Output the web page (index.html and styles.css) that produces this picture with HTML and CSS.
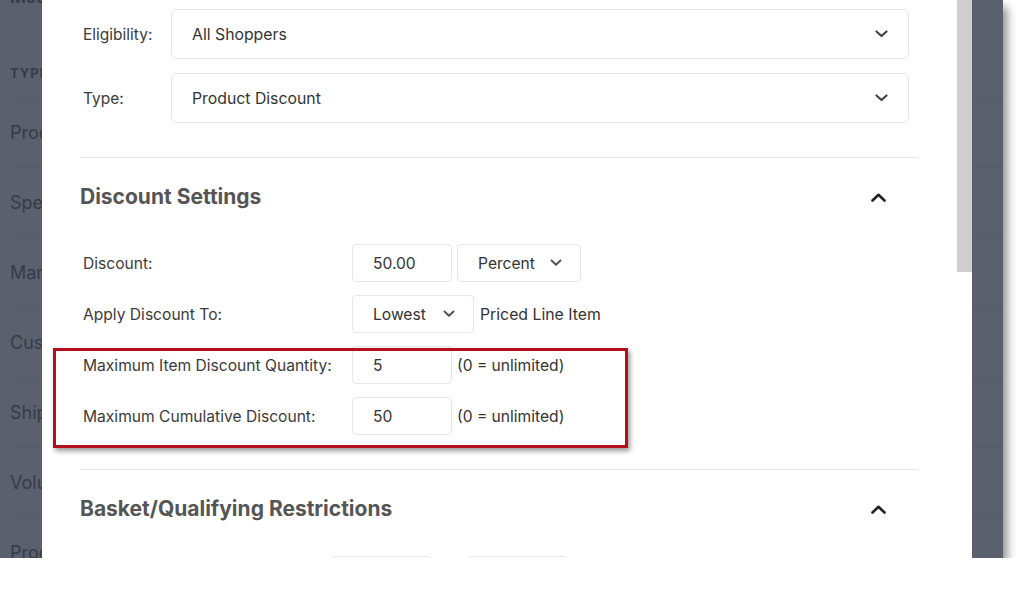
FILE: index.html
```html
<!DOCTYPE html>
<html>
  <head>
    <title>Promotion - Discount Settings</title>
    <meta charset="utf-8">
    <link rel="stylesheet" href="styles.css">
  </head>
  <body>
  <div class="screen">
    <!-- page behind the dialog -->
    <div class="bg-page">
      <div class="bg-title"><span class="bg-cell">Methods</span></div>
      <div class="bg-thead"><span class="bg-cell">TYPE</span></div>
      <div class="bg-row"><span class="bg-cell">Product Discount</span></div>
      <div class="bg-row"><span class="bg-cell">Special Price</span></div>
      <div class="bg-row"><span class="bg-cell">Markdown</span></div>
      <div class="bg-row"><span class="bg-cell">Customer Group</span></div>
      <div class="bg-row"><span class="bg-cell">Shipping</span></div>
      <div class="bg-row"><span class="bg-cell">Volume Pricing</span></div>
      <div class="bg-row"><span class="bg-cell">Product Bundle</span></div>
    </div>

    <div class="modal">
      <div class="modal-body">
        <div class="field-row">
          <label class="field-label">Eligibility:</label>
          <div class="select-box">
            <span>All Shoppers</span>
            <svg width="13" height="8" viewBox="0 0 13 8"><polyline points="1.5,1.5 6.5,6 11.5,1.5" fill="none" stroke="#444" stroke-width="2.2" stroke-linecap="round" stroke-linejoin="round"/></svg>
          </div>
        </div>
        <div class="field-row">
          <label class="field-label">Type:</label>
          <div class="select-box">
            <span>Product Discount</span>
            <svg width="13" height="8" viewBox="0 0 13 8"><polyline points="1.5,1.5 6.5,6 11.5,1.5" fill="none" stroke="#444" stroke-width="2.2" stroke-linecap="round" stroke-linejoin="round"/></svg>
          </div>
        </div>

        <div class="section">
          <div class="section-head">
            <h2>Discount Settings</h2>
            <svg width="15" height="9" viewBox="0 0 15 9"><polyline points="1.5,7.5 7.5,1.8 13.5,7.5" fill="none" stroke="#222" stroke-width="2.6" stroke-linecap="round" stroke-linejoin="round"/></svg>
          </div>

          <div class="line-row">
            <label class="line-label">Discount:</label>
            <div class="text-box">50.00</div>
            <div class="small-select percent">
              <span>Percent</span>
              <svg width="12" height="8" viewBox="0 0 12 8"><polyline points="1.5,1.5 6,5.8 10.5,1.5" fill="none" stroke="#555" stroke-width="2" stroke-linecap="round" stroke-linejoin="round"/></svg>
            </div>
          </div>
          <div class="line-row">
            <label class="line-label">Apply Discount To:</label>
            <div class="small-select lowest">
              <span>Lowest</span>
              <svg width="12" height="8" viewBox="0 0 12 8"><polyline points="1.5,1.5 6,5.8 10.5,1.5" fill="none" stroke="#555" stroke-width="2" stroke-linecap="round" stroke-linejoin="round"/></svg>
            </div>
            <span class="after-text">Priced Line Item</span>
          </div>

          <div class="highlight">
            <div class="line-row">
              <label class="line-label">Maximum Item Discount Quantity:</label>
              <div class="text-box">5</div>
              <span class="hint">(0 = unlimited)</span>
            </div>
            <div class="line-row">
              <label class="line-label">Maximum Cumulative Discount:</label>
              <div class="text-box">50</div>
              <span class="hint">(0 = unlimited)</span>
            </div>
          </div>
        </div>

        <div class="section">
          <div class="section-head">
            <h2>Basket/Qualifying Restrictions</h2>
            <svg width="15" height="9" viewBox="0 0 15 9"><polyline points="1.5,7.5 7.5,1.8 13.5,7.5" fill="none" stroke="#222" stroke-width="2.6" stroke-linecap="round" stroke-linejoin="round"/></svg>
          </div>
          <div class="line-row short">
            <label class="line-label"></label>
            <div class="text-box"></div>
            <div class="text-box gap"></div>
          </div>
        </div>
      </div>
      <div class="scrollbar"><div class="thumb"></div></div>
    </div>
  </div>
  </body>
</html>
```

FILE: styles.css
```css
body{
  margin: 0;
  background: #fff;
  font-family: Inter, "Liberation Sans", sans-serif;
}

.screen{
  width: 1003px;
  height: 558px;
  position: relative;
  overflow: hidden;
  background: #5b606e;
  box-shadow: 4px 7px 9px rgba(0, 0, 0, 0.45);
}

/* dimmed page in the back */
.bg-page{
  padding-left: 10px;
  color: #373b47;
}

.bg-cell{
  display: block;
  width: 32px;
  overflow: hidden;
  white-space: nowrap;
}

.bg-title{
  height: 22px;
  margin-top: -13px;
  line-height: 20px;
  font-size: 17px;
  font-weight: 700;
}

.bg-thead{
  height: 89px;
  display: flex;
  align-items: flex-end;
  padding-bottom: 16px;
  box-sizing: border-box;
  line-height: 16px;
  font-size: 13px;
  font-weight: 700;
  letter-spacing: 1px;
  border-bottom: 1px solid #565b69;
}

.bg-row{
  height: 70px;
  display: flex;
  align-items: center;
  font-size: 18px;
  border-bottom: 1px solid #565b69;
  box-sizing: border-box;
}

/* dialog */
.modal{
  position: absolute;
  left: 42px;
  top: 0;
  width: 930px;
  height: 558px;
  display: flex;
  background: #fff;
}

.modal-body{
  width: 915px;
  padding: 9px 39px 0 38px;
  box-sizing: border-box;
  overflow: hidden;
}

.scrollbar{
  width: 15px;
  background: #fff;
}

.thumb{
  height: 272px;
  background: #cfcfcf;
}

.field-row{
  display: flex;
  align-items: center;
  margin-bottom: 14px;
  padding-right: 9px;
}

.field-label{
  width: 88px;
  padding-left: 3px;
  font-size: 15.5px;
  color: #3b3b3b;
}

.select-box{
  flex: 1;
  height: 50px;
  border: 1px solid #e7e7e7;
  border-radius: 5px;
  box-sizing: border-box;
  display: flex;
  align-items: center;
  justify-content: space-between;
  padding: 0 20px;
  font-size: 15.8px;
  color: #333;
}

.section{
  border-top: 1px solid #e6e6e6;
  margin-top: 34px;
  padding-top: 27px;
}

.section-head{
  display: flex;
  align-items: center;
  justify-content: space-between;
  padding-right: 32px;
  margin-bottom: 35px;
}

.section-head h2{
  margin: 0;
  font-size: 21px;
  line-height: 24px;
  font-weight: 700;
  color: #555;
}

.line-row{
  display: flex;
  align-items: center;
  height: 38px;
  margin-bottom: 13px;
}

.line-label{
  width: 269px;
  padding-left: 3px;
  font-size: 15.6px;
  color: #3b3b3b;
}

.text-box{
  width: 100px;
  height: 38px;
  border: 1px solid #e7e7e7;
  border-radius: 4px;
  box-sizing: border-box;
  display: flex;
  align-items: center;
  padding-left: 20px;
  font-size: 15.6px;
  color: #333;
}

.small-select{
  height: 38px;
  border: 1px solid #e7e7e7;
  border-radius: 4px;
  box-sizing: border-box;
  display: flex;
  align-items: center;
  justify-content: space-between;
  padding: 0 18px 0 20px;
  font-size: 15.6px;
  color: #333;
}

.percent{
  width: 124px;
  margin-left: 5px;
}

.lowest{
  width: 122px;
}

.after-text{
  margin-left: 6px;
  font-size: 15.8px;
  color: #333;
}

.hint{
  margin-left: 5px;
  font-size: 15.6px;
  color: #333;
}

/* red annotation frame */
.highlight{
  position: relative;
}

.highlight::after{
  content: "";
  position: absolute;
  left: -27px;
  top: 2px;
  width: 575px;
  height: 100px;
  border: 3.5px solid #b3101c;
  box-sizing: border-box;
  box-shadow: 2px 3px 5px rgba(0, 0, 0, 0.4);
}

.highlight .line-row:last-child{
  margin-bottom: 0;
}

.short .line-label{
  width: 248px;
}

.gap{
  margin-left: 37px;
}
```
